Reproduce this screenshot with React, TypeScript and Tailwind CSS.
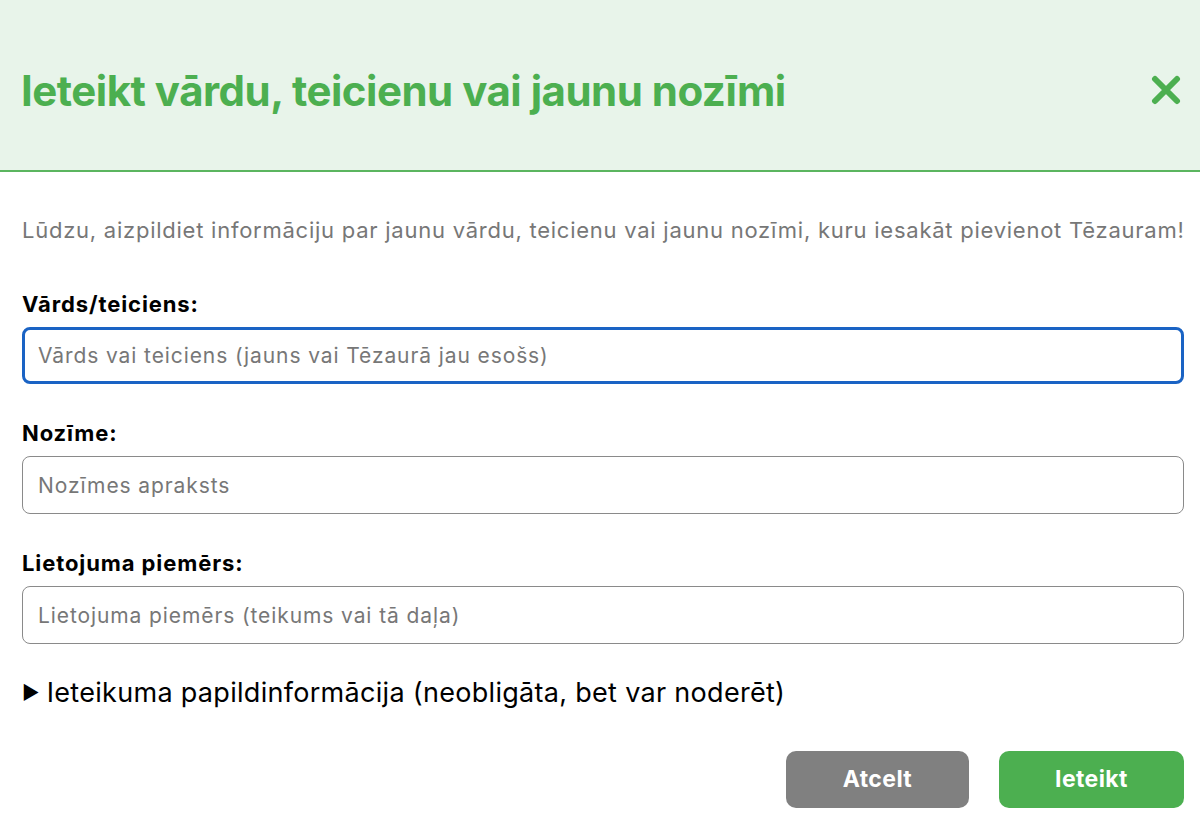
import { useState } from "react";

function Field({
  label,
  placeholder,
  focused,
}: {
  label: string;
  placeholder: string;
  focused?: boolean;
}) {
  return (
    <div className="flex flex-col gap-[11px]">
      <label className="text-[22px] leading-[24px] font-bold tracking-[0.9px] text-black">{label}</label>
      <input
        placeholder={placeholder}
        className={
          focused
            ? "h-[57px] w-full rounded-[8px] border-[3px] border-[#1a63c4] bg-white px-[13px] text-[21px] tracking-[0.9px] text-black outline-none placeholder:text-[#777]"
            : "h-[58px] w-full rounded-[8px] border-[1.5px] border-[#8a8a8a] bg-white px-[15px] text-[21px] tracking-[0.9px] text-black outline-none placeholder:text-[#777]"
        }
      />
    </div>
  );
}

export default function App() {
  const [open, setOpen] = useState(false);

  return (
    <div className="h-[822px] w-[1200px] overflow-hidden bg-white font-['Inter',sans-serif]">
      <div className="flex h-[172px] items-center justify-between border-b-2 border-[#5bb55f] bg-[#e8f4ea] pt-[10px] pl-[21px] pr-[16px]">
        <h1 className="text-[42px] font-bold tracking-[-0.5px] text-[#4caf50]">
          Ieteikt vārdu, teicienu vai jaunu nozīmi
        </h1>
        <button type="button" className="flex h-[36px] w-[36px] items-center justify-center">
          <svg viewBox="0 0 30 30" className="h-[30px] w-[30px]">
            <path d="M4 4 L26 26 M26 4 L4 26" stroke="#4caf50" strokeWidth="6" strokeLinecap="round" />
          </svg>
        </button>
      </div>

      <div className="flex flex-col pl-[22px] pr-[16px] pt-[46px]">
        <p className="whitespace-nowrap text-[22px] leading-[24px] tracking-[0.75px] text-[#777]">
          Lūdzu, aizpildiet informāciju par jaunu vārdu, teicienu vai jaunu nozīmi, kuru iesakāt pievienot Tēzauram!
        </p>

        <div className="mt-[50px] flex flex-col gap-[37px]">
          <Field label="Vārds/teiciens:" placeholder="Vārds vai teiciens (jauns vai Tēzaurā jau esošs)" focused />
          <Field label="Nozīme:" placeholder="Nozīmes apraksts" />
          <Field label="Lietojuma piemērs:" placeholder="Lietojuma piemērs (teikums vai tā daļa)" />
        </div>

        <div
          className="mt-[35px] flex cursor-pointer items-center gap-[7px] text-[27px] leading-[28px] tracking-[0.3px] text-black"
          onClick={() => setOpen(!open)}
        >
          <span className="text-[19px]">{open ? "▼" : "▶"}</span>
          <span>Ieteikuma papildinformācija (neobligāta, bet var noderēt)</span>
        </div>

        <div className="mt-[44px] flex justify-end gap-[30px]">
          <button
            type="button"
            className="h-[57px] w-[183px] rounded-[10px] bg-[#808080] text-[23px] font-bold tracking-[0.4px] text-white"
          >
            Atcelt
          </button>
          <button
            type="button"
            className="h-[57px] w-[185px] rounded-[10px] bg-[#4caf50] text-[23px] font-bold tracking-[0.4px] text-white"
          >
            Ieteikt
          </button>
        </div>
      </div>
    </div>
  );
}
